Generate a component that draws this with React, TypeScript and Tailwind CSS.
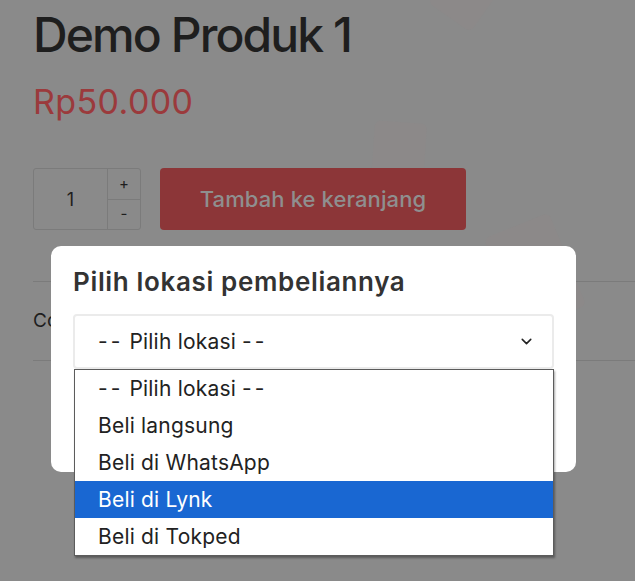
import { ChevronDown } from 'lucide-react'

const options = [
  { id: 0, label: 'Pilih lokasi', placeholder: true },
  { id: 1, label: 'Beli langsung' },
  { id: 2, label: 'Beli di WhatsApp' },
  { id: 3, label: 'Beli di Lynk' },
  { id: 4, label: 'Beli di Tokped' },
]

const activeOption = 3

function Placeholder({ label }: { label: string }) {
  return (
    <span>
      <span className="tracking-[3px]">--</span> {label} <span className="tracking-[3px]">--</span>
    </span>
  )
}

function Backdrop() {
  // faint decorative tiles behind the product page
  return (
    <>
      <div className="absolute left-[438px] top-[-30px] h-[52px] w-[52px] rotate-[35deg] rounded-md bg-[#8c8989]" />
      <div className="absolute left-[372px] top-[122px] h-[90px] w-[52px] rotate-[4deg] rounded-md bg-[#8c8989]" />
      <div className="absolute left-[500px] top-[222px] h-[100px] w-[70px] rotate-[-22deg] rounded-md bg-[#8c8989]" />
    </>
  )
}

function ProductPage() {
  return (
    <div className="relative px-[33px] pt-[6px] text-[#1e1e1e]">
      <h1 className="text-[48px] font-medium leading-[58px] tracking-[-1.9px]">Demo Produk 1</h1>
      <p className="mt-[18px] text-[34px] leading-[40px] tracking-[0.4px] text-[#9b3a3c]">Rp50.000</p>

      <div className="mt-[46px] flex items-center gap-[19px]">
        <div className="flex h-[62px] w-[108px] rounded-[3px] border border-[#7b7b7b]">
          <div className="flex w-[74px] items-center justify-center border-r border-[#7b7b7b] text-[18px]">1</div>
          <div className="flex flex-1 flex-col text-[15px]">
            <button className="flex-1 border-b border-[#7b7b7b]">+</button>
            <button className="flex-1">-</button>
          </div>
        </div>
        <button className="h-[62px] w-[306px] rounded-[4px] bg-[#8c3638] text-[22px] font-medium tracking-[0.1px] text-[#8f8f8f]">
          Tambah ke keranjang
        </button>
      </div>

      <div className="mt-[51px] -mr-[33px] border-y border-[#7b7b7b] py-[28px] text-[19px] leading-[22px]">
        Cocok
      </div>
    </div>
  )
}

function LocationDialog() {
  return (
    <div className="absolute left-[51px] top-[246px] h-[226px] w-[525px] rounded-[10px] bg-white px-[22px] pt-[20px]">
      <h2 className="text-[26px] font-semibold leading-[32px] tracking-[0.65px] text-[#333]">Pilih lokasi pembeliannya</h2>
      <div className="mt-[16px] flex h-[55px] items-center justify-between rounded-[4px] border-2 border-[#ebebeb] pl-[23px] pr-[17px] text-[21px] tracking-[0.2px] text-[#222]">
        <Placeholder label="Pilih lokasi" />
        <ChevronDown className="h-[17px] w-[17px]" strokeWidth={2.2} />
      </div>
    </div>
  )
}

function OptionList() {
  return (
    <ul className="absolute left-[74px] top-[369px] w-[480px] border border-[#5c5c5c] bg-white shadow-[1px_2px_2px_rgba(0,0,0,0.35)]">
      {options.map((opt) => (
        <li
          key={opt.id}
          className={`flex h-[37px] items-center pl-[23px] text-[21px] tracking-[0.2px] ${
            opt.id === activeOption ? 'bg-[#1967d2] text-white' : 'text-[#222]'
          }`}
        >
          {opt.placeholder ? <Placeholder label={opt.label} /> : opt.label}
        </li>
      ))}
    </ul>
  )
}

export default function App() {
  return (
    <div className="relative h-[581px] w-[635px] overflow-hidden bg-[#8a8a8a] font-['Inter',sans-serif]">
      <Backdrop />
      <ProductPage />
      <LocationDialog />
      <OptionList />
    </div>
  )
}
